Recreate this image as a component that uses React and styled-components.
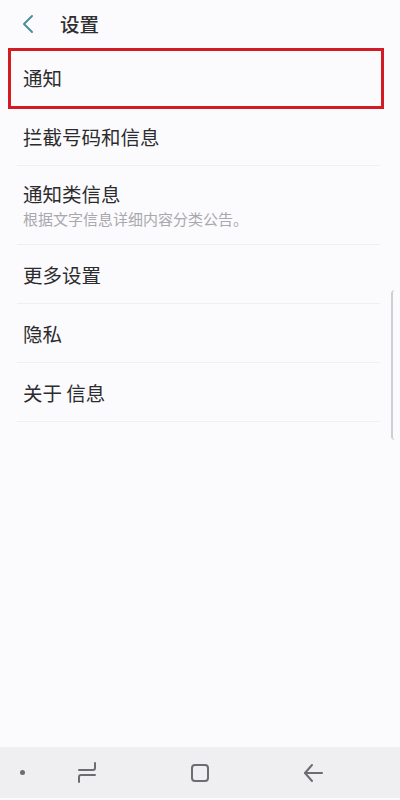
import React from 'react';
import styled, { createGlobalStyle } from 'styled-components';

const GlobalStyle = createGlobalStyle`
  html, body {
    margin: 0;
    padding: 0;
    background: #fbfafd;
  }
  body {
    font-family: "Noto Sans CJK SC", "Noto Sans", sans-serif;
    color: #2c2c2e;
  }
`;

const Screen = styled.div`
  position: relative;
  display: flex;
  flex-direction: column;
  height: 800px;
  width: 400px;
  overflow: hidden;
  background: #fbfafd;
`;

const Header = styled.header`
  display: flex;
  align-items: center;
  height: 48px;
  padding-left: 20px;
  gap: 24px;
`;

const BackButton = styled.span`
  display: flex;
  width: 16px;
  height: 20px;
  align-items: center;
  justify-content: center;
`;

const Title = styled.h1`
  margin: 0;
  font-size: 19.5px;
  font-weight: 500;
  line-height: 24px;
  color: #2f2f31;
`;

const List = styled.ul`
  list-style: none;
  margin: 0;
  padding: 0;
`;

const Row = styled.li`
  position: relative;
  display: flex;
  flex-direction: column;
  justify-content: center;
  gap: 3px;
  height: ${({ $tall }) => ($tall ? '79px' : '59px')};
  padding-left: 23px;
  box-sizing: border-box;

  &::after {
    content: '';
    display: ${({ $highlighted }) => ($highlighted ? 'none' : 'block')};
    position: absolute;
    left: 17px;
    right: 20px;
    bottom: 0;
    height: 1px;
    background: #efeef1;
  }
`;

const Highlight = styled.span`
  position: absolute;
  left: 8px;
  right: 16px;
  top: 0;
  bottom: -2px;
  border: 3.5px solid #d31b23;
  pointer-events: none;
`;

const Label = styled.span`
  font-size: 19.5px;
  line-height: 24px;
  color: #2c2c2e;
`;

const Sub = styled.span`
  font-size: 15px;
  line-height: 20px;
  color: #a9a9ad;
`;

const Spacer = styled.div`
  flex: 1;
`;

const ScrollBar = styled.div`
  position: absolute;
  right: 4px;
  top: 290px;
  height: 150px;
  width: 3px;
  border-left: 2px solid #cfcfd3;
  border-radius: 4px 0 0 4px;
`;

const NavBar = styled.nav`
  display: grid;
  grid-template-columns: 44px 86px 140px 86px 1fr;
  align-items: center;
  height: 51px;
  margin-bottom: 2px;
  background: #efeef1;
`;

const Dot = styled.span`
  justify-self: center;
  width: 5px;
  height: 5px;
  border-radius: 50%;
  background: #6d6d71;
`;

const NavIcon = styled.span`
  display: flex;
  justify-content: center;
  color: #6d6d71;
`;

const items = [
  { label: '通知', highlighted: true },
  { label: '拦截号码和信息' },
  { label: '通知类信息', sub: '根据文字信息详细内容分类公告。' },
  { label: '更多设置' },
  { label: '隐私' },
  { label: '关于 信息' },
];

const App = () => (
  <>
    <GlobalStyle />
    <Screen>
      <Header>
        <BackButton>
          <svg width="14" height="20" viewBox="0 0 14 20" fill="none">
            <path d="M11 2 L3 10 L11 18" stroke="#4b8e9a" strokeWidth="2" strokeLinecap="round" strokeLinejoin="round" />
          </svg>
        </BackButton>
        <Title>设置</Title>
      </Header>
      <List>
        {items.map((item) => (
          <Row key={item.label} $tall={!!item.sub} $highlighted={item.highlighted}>
            <Label>{item.label}</Label>
            {item.sub && <Sub>{item.sub}</Sub>}
            {item.highlighted && <Highlight />}
          </Row>
        ))}
      </List>
      <Spacer />
      <ScrollBar />
      <NavBar>
        <Dot />
        <NavIcon>
          <svg width="22" height="22" viewBox="0 0 22 22" fill="none">
            <path d="M3 8 H17 Q19 8 19 6 V1" stroke="currentColor" strokeWidth="2" strokeLinecap="round" />
            <path d="M19 13 H5 Q3 13 3 15 V20" stroke="currentColor" strokeWidth="2" strokeLinecap="round" />
          </svg>
        </NavIcon>
        <NavIcon>
          <svg width="22" height="22" viewBox="0 0 22 22" fill="none">
            <rect x="3" y="3" width="16" height="16" rx="3" stroke="currentColor" strokeWidth="2" />
          </svg>
        </NavIcon>
        <NavIcon>
          <svg width="22" height="22" viewBox="0 0 22 22" fill="none">
            <path d="M20 11 H3" stroke="currentColor" strokeWidth="2" strokeLinecap="round" />
            <path d="M10 3 L3 11 L10 19" stroke="currentColor" strokeWidth="2" strokeLinecap="round" strokeLinejoin="round" />
          </svg>
        </NavIcon>
        <span />
      </NavBar>
    </Screen>
  </>
);

export default App;
